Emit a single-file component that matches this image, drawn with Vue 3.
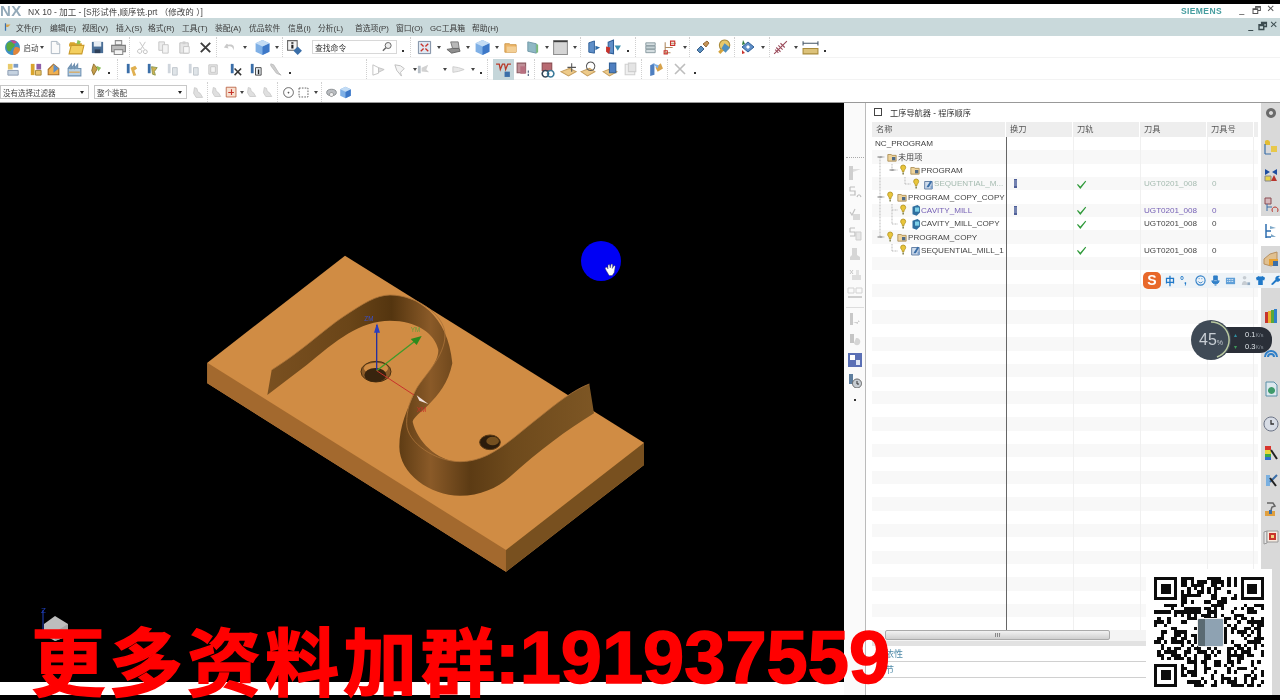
<script setup>
const I = {
  globe: [['M8 1a7 7 0 1 0 .01 0z', '#3f8fc4'], ['M3 4c3-2 6-1 7 1s-2 3-3 5-3 2-4 0-1-4 0-6z', '#58a83f'], ['M10 8c2-1 5 0 5 2s-3 5-6 5c-1-2 0-5 1-7z', '#e2863a'], ['M6 1.5c2-.6 5 0 6 2l-3 1c-1-1-2-2-3-3z', '#c44a8c']],
  doc: [['M3.500 1.500h6l3 3v10h-9z', '#fafafa', '#a9b4c0'], ['M9.500 1.500v3h3', 'none', '#a9b4c0']],
  open: [['M1 5l1-2h4l1 1h6v3H1z', '#d9a52e'], ['M1 14l2-8h12l-2 8z', '#f3cf5f', '#c89a2a'], ['M9 1l3 1-1 3H8z', '#8cc05a']],
  save: [['M2 2h12v12H2z', '#4a6e96'], ['M4 2h8v5H4z', '#e6edf3'], ['M5 10h6v4H5z', '#2d3f58']],
  print: [['M5 1.500h6v4H5z', '#f2f2f2', '#8d8d8d'], ['M1.500 6h13v6h-13z', '#bcbcbc', '#7f7f7f'], ['M4 10h8v4.500H4z', '#f4f4f4', '#8d8d8d']],
  cut: [['M5 2l5 8M11 2L6 10', 'none', '#c4c4c4'], ['M3 11a2 2 0 1 0 4 2 2 2 0 1 0-4-2zM9 12a2 2 0 1 0 4 1 2 2 0 1 0-4-1z', 'none', '#bdbdbd']],
  copy: [['M3 2h6v9H3z', '#ececec', '#c6c6c6'], ['M7 5h6v9H7z', '#f4f4f4', '#c6c6c6']],
  paste: [['M3 3h9v11H3z', '#e6e6e6', '#c0c0c0'], ['M6 1.500h3v3H6z', '#cfcfcf'], ['M7 7h6v7H7z', '#f8f8f8', '#c6c6c6']],
  x: [['M3 3l10 10M13 3L3 13', 'none', '#3c3c3c', 2]],
  xg: [['M3 3l10 10M13 3L3 13', 'none', '#bdbdbd', 1.6]],
  undo: [['M5 4L2 8l5 1-1-2c3-1 6 0 6 4 2-4 0-7-5-6z', '#c9c9c9']],
  cube: [['M8 1l6.500 3v8L8 15l-6.500-3V4z', '#7fb0e6'], ['M8 7l6.500-3v8L8 15z', '#3d78c8'], ['M1.500 4L8 7l6.500-3L8 1z', '#c3dcf5']],
  info: [['M1.500 1.500h9v9h-9z', '#f5f5f5', '#666'], ['M5 3h2v1.500H5zM5 5.500h2V9H5z', '#222'], ['M11 7l4 4-4 4-4-4z', '#3a6ea8']],
  view: [['M1.500 1.500h13v13h-13z', '#dfe8f2', '#7a8aa0'], ['M4 4l3 3M12 4L9 7M4 12l3-3M12 12L9 9', 'none', '#c8322a', 1.4]],
  laptop: [['M5 2h8l1 7H7z', '#b8b8b8', '#777'], ['M1 10l6-1h7l1 3-9 2z', '#8f8f8f', '#666']],
  folderO: [['M2 4h5l1 1h6v8H2z', '#edb76a', '#cf9748'], ['M4 7h10v6H4z', '#f3cf95']],
  shade: [['M3 2l9 2v10l-9-2z', '#8fb8c4', '#6f98a8'], ['M12 4l2 1v8l-2 1z', '#79b97a']],
  square: [['M1.500 1.500h13v13h-13z', '#d5d5d5', '#8f8f8f'], ['M1.500 1.500h13v1.500h-13z', '#3c3c3c']],
  door: [['M3 3l6-2v13l-6-1z', '#5f8fc8', '#2f5f98'], ['M10 6l5 2-5 3z', '#2c6aa8']],
  door2: [['M3 3l5-2v13l-5-1z', '#5f8fc8', '#2f5f98'], ['M9 6h6l-3 5z', '#3a8fb0'], ['M1 7l4 1-1 6-3-2z', '#c8322a']],
  stack: [['M3 3h10v3H3z', '#d4dde0', '#8a9aa0'], ['M3 6.500h10v3H3z', '#c5d2d6', '#8a9aa0'], ['M3 10h10v3.500H3z', '#d4dde0', '#8a9aa0']],
  tree: [['M3 3v10h5M3 8h7M8 4h5', 'none', '#b08a60'], ['M8 2h4v4H8zM2 11h3v3H2z', 'none', '#c8322a']],
  diamond: [['M2 11l4-4 3 3-4 4z', '#5a8fc0', '#3a5f88'], ['M8 5l4-3 2 2-3 4z', '#c79558', '#946a3a']],
  key: [['M9 1a5 5 0 1 0 .01 0z', '#e8c86a', '#a88a3a'], ['M9 4l5 4-4 5-4-4z', '#4f8fc0'], ['M3 12l3-3 2 2-3 3z', '#d5a33c']],
  dia2: [['M8 3l6 5-6 5-6-5z', '#5f8fc8', '#2f5f98'], ['M8 6l2 2-2 2-2-2z', '#fff'], ['M3 1l2 4-3 1z', '#2c7a3a'], ['M2 11l3 3-3 1z', '#c8322a']],
  spring: [['M2 14L14 2M4 8l4 4M6 6l4 4M8 4l4 4M3 10l3 3', 'none', '#9a4a5a', 1]],
  ruler: [['M1 4h14M1 2v4M15 2v4', 'none', '#456', 1], ['M1 9h14v5H1z', '#dcc27a', '#a88a3a']],
  mill: [['M2 2h5v6H2z', '#e8ca6a'], ['M8 2h5v4H8z', '#7a9bc6'], ['M2 9h11v5H2z', '#c5d2e0', '#8a9ab0']],
  mill2: [['M3 2h4v12H3z', '#d9a52e'], ['M9 2h5v6H9z', '#8e5fa8'], ['M8 9h6v5H8z', '#e8c26a', '#a88a3a']],
  mill3: [['M3 8l5-5 5 4v6H3z', '#f0b050', '#a8702a'], ['M8 3l5 4-5 4z', '#5f8fc8']],
  fac: [['M2 7h12v7H2z', '#b6d0e6', '#6f90b0'], ['M2 7l3-4v4l3-4v4l3-4v4', '#7aa0c0', '#6f90b0'], ['M3 10h10v1H3z', '#e0a040']],
  bolt: [['M6 2l4 5-4 7-2-5z', '#c8a04a', '#8f7030'], ['M9 4l5 2-3 4z', '#8fbf5a']],
  mk1: [['M3 2h3v10H3z', '#3a6ea8'], ['M7 6l5-2 2 3-3 2 2 5-3 1z', '#e0b050']],
  mk2: [['M3 2h3v10H3z', '#3a6ea8'], ['M7 5l6 1-3 4 1 4-3-1z', '#d0b050', '#8f9a50']],
  mk3: [['M3 2h3v10H3z', '#cfd5dc'], ['M8 6h5v8H8z', '#dfe4e8', '#c0c6cc']],
  mk4: [['M3 3h9v10H3z', '#e4e4e4', '#c8c8c8'], ['M5 5h5v6H5z', '#f4f4f4', '#c8c8c8']],
  mk5: [['M3 2h3v10H3z', '#3a6ea8'], ['M7 7l7 7M14 7l-7 7', 'none', '#333', 1.6]],
  mk6: [['M3 2h3v10H3z', '#3a6ea8'], ['M8 6h6v8H8z', '#e8eef3', '#444'], ['M10.500 8h1.500v5h-1.500z', '#222']],
  mk7: [['M3 2l3 1 5 8 3 3-5-2-6-8z', '#cfcfcf', '#bdbdbd']],
  fl1: [['M2 3l6 3v6l-6 2z', 'none', '#c2c2c2'], ['M8 6l6 2-6 3z', '#dfdfdf', '#c2c2c2']],
  fl2: [['M2 3l6 1 4 3-4 4 1 4-5-6z', '#f4f4f4', '#bdbdbd']],
  fl3: [['M2 4h3v8H2z', '#b8c0c8'], ['M6 6l7-3-2 5 3 3-8-1z', '#d2d2d2']],
  fl4: [['M2 5l6 1 6 2-6 2-6 1z', '#e8e8e8', '#cdcdcd']],
  hi: [['M1 3h3l1 5 2-5h2l1 5 2-5h3', 'none', '#b83a2a', 1.2], ['M9 10h5v5H9z', '#3a6ea8']],
  hi2: [['M2 2h8v9H2z', '#c09098', '#8a5a60'], ['M5 5h5v7H5z', '#b87080'], ['M12 9h1v2h-1zM12 12h1v2h-1z', '#3a5070']],
  op1: [['M3 2h9v7H3z', '#b86a72', '#8a4a50'], ['M6 9a3 3 0 1 0 .01 0z', 'none', '#345', 1.5], ['M11 9a3 3 0 1 0 .01 0z', 'none', '#3a7a9a', 1.5]],
  op2: [['M1 10l8-3 6 3-7 4z', '#eecb8a', '#c8a060'], ['M11 2v8M7 6h8', 'none', '#555', 1]],
  op3: [['M1 10l8-3 5 3-7 4z', '#eecb8a', '#c8a060'], ['M10 1a4 4 0 1 0 .01 0z', 'none', '#555', 1]],
  op4: [['M1 10l8-3 5 3-7 4z', '#eecb8a', '#c8a060'], ['M7 2h6v9H7z', '#4f7fc0', '#2f5f98']],
  op5: [['M3 3h9v10H3z', '#f0f0f0', '#cfcfcf'], ['M6 2h7v8H6z', '#e4e4e4', '#cfcfcf']],
  op6: [['M3 4l4-2v11l-4 1z', '#4f7fc0'], ['M8 6l5-4 2 5-5 3z', '#d7a24a'], ['M5 2l6 2-1 3z', '#7fb0e6']],
  sel: [['M3 2l3 1 1 4 3 2 3 5H5L2 9z', '#dfdfdf', '#c6c6c6']],
  rbox: [['M1.500 1.500h12v12h-12z', '#f7e0d0', '#b85a3a'], ['M4 8h7M8 4v7', 'none', '#c8322a', 1.4]],
  circ: [['M8 2a6 6 0 1 0 .01 0z', 'none', '#555', 1.1], ['M8 7a1 1 0 1 0 .01 0z', '#555']],
  dash: [['M2.500 2.500h11v11h-11z', 'none', '#555', 1.1, '2 1.500']],
  barrel: [['M2 8c0-3 3-4 6-4s6 1 6 4-3 4-6 4-6-1-6-4z', '#b9bcc0', '#7f8488'], ['M8 8a2.500 2.500 0 1 0 .01 0z', '#eee', '#888']],
  side1: [['M2 1h4v14H2z', '#cfcfcf'], ['M6 4h8l-8 3z', '#dedede']],
  side2: [['M3 2h5M3 2v4h5v4H3M10 12c1-3 3-3 4 0', 'none', '#bdbdbd', 1.2]],
  side3: [['M3 6l2 3 3-6', 'none', '#c2c2c2', 1.2], ['M6 8h7v6H6z', '#d9d9d9']],
  side4: [['M3 2h5M3 2v4h5v4H3', 'none', '#bdbdbd', 1.2], ['M9 6h5v8H9z', '#e6e6e6', '#cfcfcf']],
  side5: [['M5 2h5v7l3 2v3H3v-3l2-2z', '#d6d6d6']],
  side6: [['M3 4l3 4M6 4l-3 4', 'none', '#c6c6c6'], ['M5 9h9v5H5z', '#dedede'], ['M9 4h3v5H9z', '#e2e2e2']],
  side7: [['M1 2h6v5H1zM9 2h6v5H9z', 'none', '#d2d2d2'], ['M1 11h14', 'none', '#c0c0c0', 1.5]],
  side8: [['M3 1h3v12H3z', '#c8c8c8'], ['M6 10h7l-2-2v4z', '#cfcfcf']],
  side9: [['M3 2h4v9H3z', '#c5c5c5'], ['M9 6c3 0 5 2 4 5s-5 3-6 0z', '#d6d6d6']],
  side10: [['M1 1h14v14H1z', '#5a6fb5'], ['M3 3h5v5H3z', '#fff'], ['M9 8h4v5H9z', '#dfe6f5']],
  side11: [['M2 2h4v10H2z', '#5f7f9f'], ['M10 7a4.500 4.500 0 1 0 .01 0z', '#c6ccd2', '#666'], ['M10 9v3h2', 'none', '#333']],
  gear: [['M8 3a5 5 0 1 0 .01 0zM8 6a2 2 0 1 1-.01 0z', '#6a6a6a']],
  r1: [['M2 2a3 3 0 0 1 5 1v3H2z', '#e2bd35'], ['M8 7h6v6H8z', '#e8c84a'], ['M2 5v10M2 15h6', 'none', '#3a6ea8', 1.2]],
  r2: [['M2 2l5 3-5 3zM14 2L9 5l5 3z', '#1f4fa0'], ['M2 9h6v5H2z', '#e8d24a', '#888'], ['M8 14l6 0-3-6z', '#b8342c']],
  r3: [['M2 2h6v6H2z', '#d5b8bc', '#8a4a50'], ['M4 8v7M4 11h5', 'none', '#3a6ea8'], ['M12 11a3 3 0 1 0 .01 0z', 'none', '#b8342c']],
  r4: [['M3 1v14M3 8h5M3 14h5', 'none', '#2f6fb0', 1.5], ['M7 3l6 2-6 1zM8 11l5 3H8z', '#7ea8c8']],
  r5: [['M1 8l6-5 7-2v12l-6 2-7-2z', '#e0c090', '#b89060'], ['M6 8h9v6H6z', '#e8a030'], ['M10 10h5v5h-5z', '#3a6ea8']],
  r6: [['M2 4h3v11H2z', '#c8342c'], ['M5 3h3v12H5z', '#e8b030'], ['M8 2h3v13H8z', '#5aa83a'], ['M11 1h3v14h-3z', '#2f7fc8']],
  r7: [['M2 13a6 6 0 0 1 12 0', 'none', '#2f7fc8', 2], ['M5 13a3 3 0 0 1 6 0', 'none', '#2f7fc8', 2]],
  r8: [['M3 1h8l3 3v11H3z', '#dce8ee', '#5a90a8'], ['M8.500 6a3.500 3.500 0 1 0 .01 0z', '#3f9a6a']],
  r9: [['M8 1a7 7 0 1 0 .01 0z', '#d8dde6', '#6a7285'], ['M8 4v4h3', 'none', '#333', 1.3]],
  r10: [['M2 1h6v4H2z', '#d8342c'], ['M2 5h6v4H2z', '#e8d83a'], ['M2 9h6v3H2z', '#3aaa4a'], ['M2 12h6v3H2z', '#2f6fd0'], ['M8 5l6 9', 'none', '#222', 2]],
  r11: [['M3 3h4v11H3z', '#7ab0e0'], ['M7 10l7-7', 'none', '#3a6ea8', 2], ['M7 6l6 8', 'none', '#222', 2]],
  r12: [['M4 2h6l2 3-3 1-1 3', 'none', '#666', 1.5], ['M2 10h10v5H2z', '#e0a040'], ['M6 9h3v4H6z', '#3a6ea8']],
  r13: [['M1 3l3-1v12l-3 1z', '#e6e6e6', '#999'], ['M4 2h11v11H4z', '#f6eadf', '#999'], ['M6 4h7v7H6z', '#c8342c'], ['M8 6h3v3H8z', '#f0d080']],
  menu: [['M3 2h2v12H3z', '#3a6ea8'], ['M5 4h7L8 8H5z', '#d7a24a']],
  bulb: [['M5 1a3 3 0 0 1 3 3c0 2-2 2.500-2 5H4c0-2.500-2-3-2-5a3 3 0 0 1 3-3z', '#e9c53a', '#b09020'], ['M4 10h2v2.500H4z', '#8a8a5a']],
  fold: [['M1 4h4l1 1h5v7H1z', '#eed39a', '#a88a50'], ['M6 7h4v4H6z', '#4f6a88']],
  seq: [['M2 4h9v9H2z', '#cfdcec', '#4f6f98'], ['M4 11l5-8 2 1-4 7z', '#3a6ea8'], ['M9 9h3v4H9z', '#7fa0c8']],
  cav: [['M3 3l6-2 3 2v7l-4 4-5-2z', '#2f6f9f'], ['M6 4h5v5H6z', '#7ed0e8']],
  tool: [['M1 1h3v9H1z', '#4f5f98'], ['M1 3h3M1 5h3M1 7h3', 'none', '#c8d4e8', .6]],
  chk: [['M1 6l3 3 6-7 1 1-7 9-4-5z', '#2f9a3a']]
}
// Items are given by their centre x; each becomes a flex cell with a width and a leading margin.
const layout = (list, start = 0) => {
  let end = start
  return list.map((it, i) => {
    const kind = it[1]
    const dp = i ? it[0] - list[i - 1][0] : 40
    const dn = i < list.length - 1 ? list[i + 1][0] - it[0] : 40
    let half = Math.min(dp, dn) / 2
    if (kind === 'search') half = 42.5
    if (kind === 'hi') half = 10.5
    if (kind === 'text') half = 10
    const ml = it[0] - half - end
    end = it[0] + half
    return { kind, w: half * 2, ml, size: it[2] || 15, label: it[3] }
  })
}
const row1 = layout([[12, 'globe', 17], [31, 'text', 0, '启动'], [42, 'arrow'], [55, 'doc'], [76, 'open', 17], [97, 'save'], [118, 'print', 17], [130, 'sep'], [142, 'cut'], [163, 'copy'], [184, 'paste'], [205, 'x'], [217, 'sep'], [229, 'undo'], [245, 'arrow'], [262, 'cube', 17], [277, 'arrow'], [283, 'sep'], [294, 'info', 17], [354.5, 'search'], [403, 'dot'], [411, 'sep'], [424, 'view'], [439, 'arrow'], [453, 'laptop'], [468, 'arrow'], [482, 'cube', 17], [497, 'arrow'], [510, 'folderO'], [532, 'shade'], [547, 'arrow'], [560, 'square', 17], [575, 'arrow'], [581, 'sep'], [593, 'door'], [613, 'door2', 17], [628, 'dot'], [636, 'sep'], [650, 'stack'], [670, 'tree', 17], [685, 'arrow'], [690, 'sep'], [703, 'diamond', 16], [723, 'key', 17], [735, 'sep'], [748, 'dia2', 16], [763, 'arrow'], [770, 'sep'], [780, 'spring', 17], [796, 'arrow'], [810, 'ruler', 17], [825, 'dot']])
const row2 = layout([[13, 'mill'], [35, 'mill2'], [53, 'mill3', 17], [74, 'fac', 17], [95, 'bolt'], [109, 'dot'], [118, 'sep'], [131, 'mk1'], [152, 'mk2'], [172, 'mk3'], [193, 'mk3'], [213, 'mk4'], [235, 'mk5'], [255, 'mk6'], [275, 'mk7'], [290, 'dot'], [367, 'sep'], [378, 'fl1'], [400, 'fl2'], [415, 'arrow'], [423, 'fl3'], [445, 'arrow'], [458, 'fl4'], [473, 'arrow'], [481, 'dot'], [488, 'sep'], [503, 'hi', 17], [523, 'hi2', 17], [535, 'sep'], [547, 'op1', 17], [568, 'op2', 17], [588, 'op3', 17], [610, 'op4', 17], [630, 'op5', 17], [642, 'sep'], [655, 'op6', 17], [668, 'sep'], [680, 'xg', 16], [695, 'dot']])
const row3 = layout([[198, 'sel', 13], [208, 'sep'], [217, 'sel', 12], [231, 'rbox', 13], [242, 'arrow'], [252, 'sel', 12], [268, 'sel', 12], [278, 'sep'], [288, 'circ', 13], [303, 'dash', 13], [316, 'arrow'], [322, 'sep'], [331, 'barrel', 13], [345, 'cube', 13]], 187)
const menus = [['文件(F)', 34], ['编辑(E)', 32], ['视图(V)', 34], ['插入(S)', 32], ['格式(R)', 34], ['工具(T)', 33], ['装配(A)', 34], ['优品软件', 39], ['信息(I)', 30], ['分析(L)', 37], ['首选项(P)', 41], ['窗口(O)', 34], ['GC工具箱', 42], ['帮助(H)', 30]]
const cols = [['名称', 134], ['换刀', 67], ['刀轨', 67], ['刀具', 67], ['刀具号', 47]]
const rows = [
  { n: 'NC_PROGRAM', pad: 3, ic: [] },
  { n: '未用项', pad: 15, ic: ['fold'] },
  { n: 'PROGRAM', pad: 27, ic: ['bulb', 'fold'] },
  { n: 'SEQUENTIAL_M...', pad: 40, ic: ['bulb', 'seq'], c: 'ghost', tool: true, chk: true, tl: 'UGT0201_008' },
  { n: 'PROGRAM_COPY_COPY', pad: 14, ic: ['bulb', 'fold'] },
  { n: 'CAVITY_MILL', pad: 27, ic: ['bulb', 'cav'], c: 'purple', tool: true, chk: true, tl: 'UGT0201_008' },
  { n: 'CAVITY_MILL_COPY', pad: 27, ic: ['bulb', 'cav'], chk: true, tl: 'UGT0201_008' },
  { n: 'PROGRAM_COPY', pad: 14, ic: ['bulb', 'fold'] },
  { n: 'SEQUENTIAL_MILL_1', pad: 27, ic: ['bulb', 'seq'], chk: true, tl: 'UGT0201_008' }
]
const blanks = Array.from({ length: 28 })
const leftIcons = ['side1', 'side2', 'side3', 'side4', 'side5', 'side6', 'side7', 'side8', 'side9', 'side10', 'side11']
const rightIcons = [['gear', 111], ['r1', 145], ['r2', 173], ['r3', 202], ['r4', 229], ['r5', 257], ['r6', 314], ['r7', 350], ['r8', 387], ['r9', 422], ['r10', 451], ['r11', 478], ['r12', 507], ['r13', 535]].map((it, i, a) => ({ k: it[0], h: (i ? it[1] - a[i - 1][1] : 18) }))

// QR pattern: finder squares plus a fixed pseudo-random fill
const N = 33
const finder = (x, y, px, py) => px >= x && px < x + 7 && py >= y && py < y + 7 && (px === x || px === x + 6 || py === y || py === y + 6 || (px >= x + 2 && px <= x + 4 && py >= y + 2 && py <= y + 4))
const inBox = (x, y) => (x < 8 && y < 8) || (x >= N - 8 && y < 8) || (x < 8 && y >= N - 8)
let qr = ''
let seed = 91937559
for (let y = 0; y < N; y++) for (let x = 0; x < N; x++) {
  seed = (seed * 1103515245 + 12345) & 0x7fffffff
  const on = inBox(x, y) ? (finder(0, 0, x, y) || finder(N - 7, 0, x, y) || finder(0, N - 7, x, y)) : ((seed >> 16) & 3) < 2
  if (on) qr += `M${x} ${y}h1v1h-1z`
}
</script>

<template>
  <div class="app">
    <div class="topblack"></div>
    <div class="title">
      <span class="nx">NX</span><span class="title-text">NX 10 - 加工 - [S形试件,顺序铣.prt （修改的 ）]</span>
      <span class="siemens">SIEMENS</span>
      <span class="winbtns"><i>_</i><i>🗗</i><i>✕</i></span>
    </div>
    <div class="menubar">
      <svg class="ico menuic" viewBox="0 0 16 16" width="10" height="10"><path v-for="(p, i) in I.menu" :key="i" :d="p[0]" :fill="p[1]" /></svg>
      <span v-for="m in menus" :key="m[0]" class="mi" :style="{ width: m[1] + 'px' }">{{ m[0] }}</span>
      <span class="winbtns dark"><i>_</i><i>🗗</i><i>✕</i></span>
    </div>
    <div class="tools">
      <div v-for="(r, ri) in [row1, row2]" :key="ri" class="trow">
        <div v-for="(it, i) in r" :key="i" class="cell" :class="{ hi: it.kind === 'hi' }" :style="{ width: it.w + 'px', marginLeft: it.ml + 'px' }">
          <i v-if="it.kind === 'sep'" class="sep"></i>
          <i v-else-if="it.kind === 'arrow'" class="arrow"></i>
          <i v-else-if="it.kind === 'dot'" class="dot"></i>
          <span v-else-if="it.kind === 'text'" class="ttext">{{ it.label }}</span>
          <span v-else-if="it.kind === 'search'" class="search"><span>查找命令</span>
            <svg viewBox="0 0 16 16" width="12" height="12"><circle cx="9.500" cy="6" r="4" fill="#eee" stroke="#666" stroke-width="1.300" /><path d="M6.500 9l-4 4" stroke="#666" stroke-width="2" /></svg>
          </span>
          <svg v-else viewBox="0 0 16 16" :width="it.size" :height="it.size"><path v-for="(p, k) in I[it.kind]" :key="k" :d="p[0]" :fill="p[1]" :stroke="p[2] || 'none'" :stroke-width="p[3] || 1" :stroke-dasharray="p[4]" /></svg>
        </div>
      </div>
      <div class="trow r3">
        <div class="select s1"><span>没有选择过滤器</span><i></i></div>
        <div class="select s2"><span>整个装配</span><i></i></div>
        <div v-for="(it, i) in row3" :key="i" class="cell" :style="{ width: it.w + 'px', marginLeft: it.ml + 'px' }">
          <i v-if="it.kind === 'sep'" class="sep"></i>
          <i v-else-if="it.kind === 'arrow'" class="arrow"></i>
          <svg v-else viewBox="0 0 16 16" :width="it.size" :height="it.size"><path v-for="(p, k) in I[it.kind]" :key="k" :d="p[0]" :fill="p[1]" :stroke="p[2] || 'none'" :stroke-width="p[3] || 1" :stroke-dasharray="p[4]" /></svg>
        </div>
      </div>
    </div>

    <div class="main">
      <div class="viewcol">
        <div class="viewport">
          <svg class="scene" viewBox="0 103 844 579" width="844" height="579">
            <defs>
              <linearGradient id="wall" x1="0" y1="0" x2="1" y2="0">
                <stop offset="0" stop-color="#7a5020" /><stop offset=".25" stop-color="#6a4518" /><stop offset=".38" stop-color="#54350f" />
                <stop offset=".5" stop-color="#8a5a28" /><stop offset=".62" stop-color="#5c3b14" /><stop offset=".75" stop-color="#6e4a1c" /><stop offset="1" stop-color="#7d5624" />
              </linearGradient>
            </defs>
            <g transform="translate(190 240) scale(.33333)">
              <path d="M465 47L1362 608V675L948 995L52 430V368Z" fill="#d08c44" />
              <path d="M52 368L948 930V995L52 430Z" fill="#a3692e" />
              <path d="M948 930L1362 608V675L948 995Z" fill="#78501f" />
              <ellipse cx="558" cy="395" rx="45" ry="31" fill="#8a5a28" stroke="#4a3010" stroke-width="3" />
              <ellipse cx="558" cy="385" rx="36" ry="17" fill="#d08c44" />
              <ellipse cx="556" cy="405" rx="33" ry="21" fill="#38240e" />
              <ellipse cx="900" cy="607" rx="31" ry="22" fill="#2b1c0c" stroke="#5a3a14" stroke-width="3" />
              <ellipse cx="908" cy="603" rx="19" ry="13" fill="#75501f" />
              <path d="M245 390C340 330 400 270 460 230C520 190 560 165 600 165C680 165 775 225 787 370C775 430 745 465 715 495C690 520 672 530 668 545C680 600 740 665 810 665C900 665 960 600 1050 530C1100 490 1150 450 1198 432L1212 520C1130 570 1050 630 960 710C920 745 870 767 810 767C720 767 628 700 628 620C628 560 650 510 680 445C705 405 745 370 745 330C735 280 680 242 600 242C510 242 440 300 350 375L232 465Z" fill="url(#wall)" />
              <path d="M245 390C340 330 400 270 460 230C520 190 560 165 600 165C680 165 765 225 765 285C765 350 700 410 680 445C660 480 650 510 650 550C650 610 740 665 810 665C900 665 960 600 1050 530C1100 490 1150 450 1198 432" fill="none" stroke="#a97238" stroke-width="2.500" />
              <path d="M560 390V255" stroke="#2530a0" stroke-width="4" /><path d="M552 278L561 250L570 278Z" fill="#2a3fc0" />
              <path d="M560 392L682 298" stroke="#3f9a2a" stroke-width="4" /><path d="M662 297L695 288L680 315Z" fill="#2c8a1c" />
              <path d="M560 392L672 465" stroke="#c8302a" stroke-width="3" /><path d="M680 466L715 492L688 482Z" fill="#f2e2dc" />
              <text x="523" y="243" class="ax" fill="#3a4fc8">ZM</text>
              <text x="662" y="277" class="ax" fill="#5ea03a">YM</text>
              <text x="680" y="517" class="ax" fill="#c8302a">XM</text>
            </g>
            <circle cx="601" cy="261" r="20" fill="#0000f4" />
            <path d="M605 268l2-1 1 2v-4l1.500-.5.700 3.500 1-4 1.500.5-.500 4 2-3 1 1-1 6-2 3h-3l-3-5z" fill="#fff" stroke="#444" stroke-width=".4" />
            <g transform="translate(42 607)">
              <path d="M1 3v24" stroke="#2040c0" stroke-width="1" /><path d="M2 17L13 9l13 8v12l-13 5-11-6z" fill="#bdbdbd" />
              <path d="M13 25l13-8v12l-13 5z" fill="#a5a5a5" />
              <text x="-1" y="6" class="tri" fill="#2040c0">Z</text>
            </g>
          </svg>
        </div>
        <div class="whitestrip"></div>
      </div>

      <div class="panel">
        <div class="leftstrip">
          <i class="dots"></i>
          <template v-for="(k, i) in leftIcons" :key="k">
            <i v-if="i === 7" class="hr"></i>
            <svg viewBox="0 0 16 16" width="16" height="16"><path v-for="(p, j) in I[k]" :key="j" :d="p[0]" :fill="p[1]" :stroke="p[2] || 'none'" :stroke-width="p[3] || 1" /></svg>
          </template>
          <i class="dot"></i>
        </div>
        <div class="nav">
          <div class="navtitle"><i class="cb"></i><span>工序导航器 - 程序顺序</span></div>
          <div class="thead"><span v-for="c in cols" :key="c[0]" :style="{ width: c[1] + 'px' }">{{ c[0] }}</span></div>
          <div class="tbody">
            <div v-for="r in rows" :key="r.n" class="tr">
              <div class="td name" :class="r.c" :style="{ paddingLeft: r.pad + 'px' }">
                <svg v-for="k in r.ic" :key="k" viewBox="0 0 12 14" width="10" height="12"><path v-for="(p, j) in I[k]" :key="j" :d="p[0]" :fill="p[1]" :stroke="p[2] || 'none'" :stroke-width="p[3] || 1" /></svg>
                <span>{{ r.n }}</span>
              </div>
              <div class="td c2"><svg v-if="r.tool" viewBox="0 0 5 11" width="5" height="11"><path v-for="(p, j) in I.tool" :key="j" :d="p[0]" :fill="p[1]" :stroke="p[2] || 'none'" :stroke-width="p[3] || 1" /></svg></div>
              <div class="td c3"><svg v-if="r.chk" viewBox="0 0 12 12" width="10" height="10"><path :d="I.chk[0][0]" :fill="I.chk[0][1]" /></svg></div>
              <div class="td c4" :class="r.c">{{ r.tl }}</div>
              <div class="td c5" :class="r.c">{{ r.tl ? '0' : '' }}</div>
            </div>
            <div v-for="(b, i) in blanks" :key="i" class="tr"><div class="td name"></div><div class="td c2"></div><div class="td c3"></div><div class="td c4"></div><div class="td c5"></div></div>
            <svg class="treelines" width="134" height="120" viewBox="873 137 134 120">
              <path d="M881 157V237M881 157h5M881 197h5M881 237h5M893 164V171M893 170h6M906 177V184M906 184h6M893 204V224M893 210h6M893 224h6M893 244V251M893 251h6" stroke="#bbb" stroke-width="1" fill="none" stroke-dasharray="1 .5" />
              <path d="M878.500 157h5M890.500 170h5M878.500 197h5M878.500 237h5" stroke="#777" stroke-width="1" />
            </svg>
          </div>
          <div class="scroll"><div class="thumb"><i></i></div></div>
          <div class="band"></div>
          <div class="sect"><span>相依性</span></div>
          <div class="sect"><span>细节</span></div>
        </div>
        <div class="rightbar">
          <div v-for="k in rightIcons" :key="k.k" class="rb" :class="{ active: k.k === 'r4' }" :style="{ marginTop: (k.h - 16) + 'px' }">
            <svg viewBox="0 0 16 16" width="16" height="16"><path v-for="(p, j) in I[k.k]" :key="j" :d="p[0]" :fill="p[1]" :stroke="p[2] || 'none'" :stroke-width="p[3] || 1" /></svg>
          </div>
        </div>
      </div>
    </div>
    <div class="botblack"></div>

    <div class="sogou">
      <span class="slogo">S</span>
      <span class="sbar">
        <b>中</b><b>°,</b>
        <svg viewBox="0 0 12 12" width="11" height="11"><circle cx="6" cy="6" r="5" fill="none" stroke="#2f7fc8" stroke-width="1.200" /><path d="M3.500 7c1 2 4 2 5 0M4 4h1M7 4h1" stroke="#2f7fc8" fill="none" /></svg>
        <svg viewBox="0 0 12 12" width="11" height="11"><path d="M4 1h4v6H4zM2 6c0 5 8 5 8 0M5 11h2" fill="#2f7fc8" stroke="#2f7fc8" /></svg>
        <svg viewBox="0 0 12 12" width="11" height="11"><path d="M1 3h10v7H1z" fill="#5f9fd8" /><path d="M2.500 5h7M2.500 7h7" stroke="#fff" stroke-dasharray="1 .8" /></svg>
        <svg viewBox="0 0 12 12" width="11" height="11"><circle cx="5" cy="3" r="2" fill="#c6ccd2" /><path d="M2 11c0-6 6-6 6 0z" fill="#c6ccd2" /><path d="M8 8h3v3H8z" fill="#8fa8c0" /></svg>
        <svg viewBox="0 0 12 12" width="11" height="11"><path d="M4 1L1 3l1 3 1.500-.5V11h5V5.500L10 6l1-3-3-2c-.5 1-3.500 1-4 0z" fill="#1f78c8" /></svg>
        <svg viewBox="0 0 12 12" width="11" height="11"><path d="M1 10l5-5c-1-3 2-5 5-4L9 3l1 1 2-1c0 3-3 5-5 4l-4 4z" fill="#1f78c8" /></svg>
      </span>
    </div>

    <div class="speed">
      <div class="pill"><div><em class="up">▴</em>0.1<small>K/s</small></div><div><em class="dn">▾</em>0.3<small>K/s</small></div></div>
      <div class="ball"><svg viewBox="0 0 40 40" width="40" height="40"><path d="M20 2a18 18 0 0 1 6 35" fill="none" stroke="#b9c9a0" stroke-width="1.500" /></svg><span>45<small>%</small></span></div>
    </div>

    <div class="qr">
      <svg viewBox="0 0 33 33" width="110" height="110" shape-rendering="crispEdges"><path :d="qr" fill="#0c0c0c" /></svg>
      <div class="qrpic"></div>
    </div>

    <div class="mark"><span class="cjk">更多资料加群</span><span class="num">:191937559</span></div>
  </div>
</template>

<style>
html, body { margin: 0; background: #000; overflow: hidden; }
</style>

<style scoped>
.app { position: relative; width: 1280px; height: 700px; display: flex; flex-direction: column; overflow: hidden; background: #fff; font-family: "Liberation Sans", "Noto Sans CJK SC", sans-serif; color: #333; filter: blur(.45px); }
i { font-style: normal; display: block; }
.topblack { height: 4px; background: #000; }
.botblack { height: 5px; background: #000; }
.title { height: 14px; display: flex; align-items: center; background: #fff; font-size: 8.500px; }
.nx { width: 28px; font-size: 15px; font-weight: 700; color: #93a9b8; line-height: 14px; letter-spacing: .5px; }
.title-text { color: #444; }
.siemens { margin-left: auto; margin-right: 14px; color: #459d9f; font-weight: 700; font-size: 8.500px; letter-spacing: .4px; }
.winbtns { display: flex; gap: 3px; width: 44px; margin-right: 0; color: #555; font-size: 10px; }
.winbtns i { width: 11.500px; text-align: center; font-family: "DejaVu Sans", sans-serif; }
.menubar { height: 18px; background: #c9d9db; display: flex; align-items: center; font-size: 7.800px; color: #3a3a3a; }
.menuic { margin: 0 3px; flex: none; }
.mi { display: block; flex: none; white-space: nowrap; }
.winbtns.dark { margin-left: auto; color: #3c4c50; width: 35px; gap: 0; font-weight: 700; }
.tools { background: #fff; display: flex; flex-direction: column; border-bottom: 1px solid #999; height: 66px; }
.trow { height: 22px; display: flex; align-items: center; padding-top: 1px; box-sizing: border-box; }
.trow:not(.r3) { border-bottom: 1px solid #f3f3f3; }
.r3 { padding-top: 2px; }
.cell { height: 21px; flex: none; display: flex; align-items: center; justify-content: center; box-sizing: border-box; }
.cell svg, .cell .search { flex: none; }
.cell.hi { background: #c5d6da; }
.sep { width: 1px; height: 20px; border-left: 1px dotted #d0d0d0; }
.arrow { width: 0; height: 0; border: 2px solid transparent; border-top: 3px solid #444; border-bottom: 0; }
.dot { width: 2px; height: 2px; background: #333; margin-top: 7px; }
.ttext { font-size: 7.500px; color: #444; white-space: nowrap; }
.search { width: 85px; height: 14px; border: 1px solid #d8d8d8; box-sizing: border-box; display: flex; align-items: center; justify-content: space-between; font-size: 7.800px; padding: 0 3px 0 2px; color: #333; }
.select { flex: none; height: 14px; border: 1px solid #c8c8c8; box-sizing: border-box; display: flex; align-items: center; justify-content: space-between; font-size: 7.500px; padding: 0 4px 0 2px; color: #444; background: #fff; }
.select i { width: 0; height: 0; border: 2.500px solid transparent; border-top: 3px solid #222; border-bottom: 0; }
.s1 { width: 89px; margin-right: 5px; }
.s2 { width: 93px; }
.main { flex: 1; display: flex; min-height: 0; }
.viewcol { width: 844px; display: flex; flex-direction: column; flex: none; }
.viewport { flex: none; height: 579px; background: #000; overflow: hidden; }
.scene { display: block; }
.ax { font-size: 19px; font-weight: 400; }
.tri { font-size: 8px; }
.whitestrip { flex: 1; background: #fff; }
.panel { flex: 1; display: flex; background: #fff; }
.leftstrip { width: 22px; flex: none; background: #fafafa; border-right: 1px solid #bbb; display: flex; flex-direction: column; align-items: center; gap: 4.200px; padding-top: 54px; box-sizing: border-box; }
.leftstrip svg { flex: none; }
.dots { width: 18px; border-top: 1px dotted #aaa; margin-bottom: 3px; }
.hr { width: 18px; border-top: 1px solid #ddd; }
.nav { width: 386px; margin-left: 6px; flex: none; display: flex; flex-direction: column; }
.navtitle { height: 19px; display: flex; align-items: center; gap: 8px; font-size: 8.200px; color: #333; padding: 0 0 2px 2px; box-sizing: border-box; }
.cb { width: 6px; height: 6px; border: 1px solid #444; }
.thead { height: 15px; display: flex; background: #eeeeee; font-size: 8.200px; color: #555; align-items: center; }
.thead span { padding-left: 4px; box-sizing: border-box; height: 15px; line-height: 15px; border-right: 1px solid #fff; }
.tbody { position: relative; height: 493px; overflow: hidden; }
.tr { height: 13.350px; display: flex; }
.tr:nth-child(even) { background: #f8f8f8; }
.td { box-sizing: border-box; height: 100%; font-size: 8.100px; line-height: 13px; color: #444; border-right: 1px solid #f0f0f0; display: flex; align-items: center; white-space: nowrap; overflow: hidden; }
.name { width: 135px; border-right: 1.500px solid #666; }
.c2 { width: 67px; padding-left: 6px; }
.c3 { width: 67px; padding-left: 3px; }
.c4 { width: 67px; padding-left: 3px; }
.c5 { width: 46px; padding-left: 4px; }
.name svg { flex: none; margin-right: 1px; }
.ghost { color: #a5bbb0; }
.purple { color: #7560b5; }
.treelines { position: absolute; left: 0; top: 0; }
.scroll { height: 11px; background: #f4f4f4; padding-left: 13px; }
.thumb { width: 225px; height: 10px; background: linear-gradient(#f2f2f2, #cfcfcf); border: 1px solid #aaa; border-radius: 2px; box-sizing: border-box; display: flex; justify-content: center; align-items: center; }
.thumb i { width: 6px; height: 4px; background: repeating-linear-gradient(90deg, #888 0 1px, #ddd 1px 2px); }
.band { height: 5px; background: #e2e2e2; }
.sect { height: 16px; border-bottom: 1px solid #d0d0d0; font-size: 9px; color: #4f8aa8; padding-left: 4px; display: flex; align-items: center; box-sizing: border-box; }
.rightbar { flex: 1; margin-left: 3px; background: #d9d9d9; display: flex; flex-direction: column; align-items: center; }
.rb { width: 100%; height: 16px; flex: none; display: flex; justify-content: center; align-items: center; }
.rb.active { background: #fff; box-shadow: 0 -7px 0 #fff, 0 7px 0 #fff; }
.sogou { position: absolute; left: 1143px; top: 271px; width: 137px; height: 19px; display: flex; align-items: center; }
.slogo { width: 18px; height: 17px; border-radius: 5px; background: #e8682a; color: #fff; font-weight: 700; font-size: 14px; line-height: 17px; text-align: center; flex: none; position: relative; z-index: 1; }
.sbar { flex: 1; height: 15px; background: #eef3f7; display: flex; align-items: center; gap: 4px; padding-left: 4px; color: #1f78c8; }
.sbar b { font-size: 10px; width: 11px; }
.speed { position: absolute; left: 1191px; top: 320px; width: 82px; height: 40px; }
.pill { position: absolute; left: 20px; top: 7px; width: 61px; height: 26px; border-radius: 0 12px 12px 0; background: #2a2f38; color: #dfe4e8; font-size: 7.500px; padding: 2px 0 0 33px; box-sizing: border-box; line-height: 11px; }
.pill em { font-style: normal; margin-right: 8px; color: #2f8ea0; font-size: 6px; margin-left: -10px; }
.pill em.dn { color: #3f9a5a; }
.pill small { font-size: 5.500px; color: #8a929a; }
.ball { position: absolute; left: 0; top: 0; width: 40px; height: 40px; border-radius: 50%; background: #3f4a56; color: #c8ced4; display: flex; align-items: center; justify-content: center; font-size: 16px; }
.ball svg { position: absolute; left: 0; top: 0; }
.ball small { font-size: 7px; }
.qr { position: absolute; left: 1146px; top: 569px; width: 126px; height: 126px; background: #fff; display: flex; align-items: center; justify-content: center; }
.qrpic { position: absolute; left: 51px; top: 49px; width: 25px; height: 27px; border-radius: 2px; border: 1px solid #eee; background: linear-gradient(90deg, #5a6a72 0 30%, #8ea2b2 30% 100%); }
.mark { position: absolute; left: 31px; top: 619px; height: 78px; display: flex; align-items: center; color: #ff0000; font-weight: 700; white-space: nowrap; font-family: "Noto Sans CJK SC", sans-serif; line-height: 78px; -webkit-text-stroke: 1.500px #f00; }
.cjk { font-size: 74px; letter-spacing: 4px; }
.num { font-size: 74px; letter-spacing: 0; margin-left: -4px; font-family: "Liberation Sans", sans-serif; }
</style>
